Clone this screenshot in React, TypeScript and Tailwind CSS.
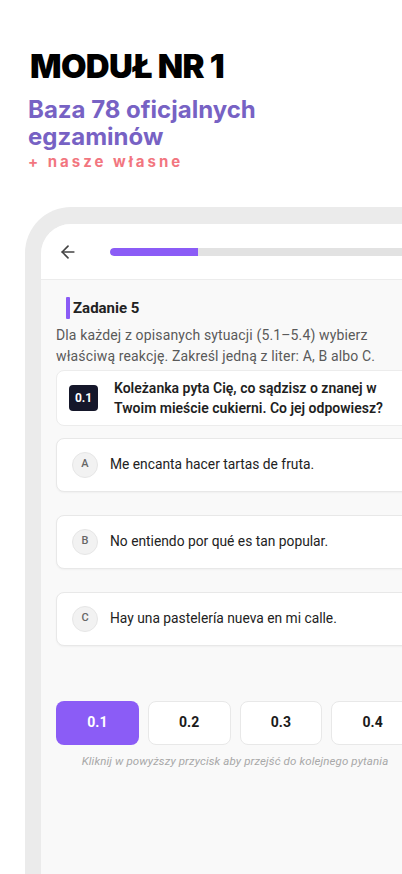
import React from 'react';

const options = [
  { letter: 'A', text: 'Me encanta hacer tartas de fruta.' },
  { letter: 'B', text: 'No entiendo por qué es tan popular.' },
  { letter: 'C', text: 'Hay una pastelería nueva en mi calle.' },
];

const steps = ['0.1', '0.2', '0.3', '0.4'];

const App: React.FC = () => {
  return (
    <div className="w-[402px] h-[874px] overflow-hidden bg-white font-['Inter',sans-serif]">
      {/* Headline */}
      <div className="pt-[46px] pl-[30px]">
        <h1 className="text-[33px] leading-[40px] font-black tracking-[-0.02em] text-black">MODUŁ NR 1</h1>
        <h2 className="mt-[10px] -ml-[2px] text-[24px] leading-[27px] font-bold text-[#7762c4] w-[260px]">
          Baza 78 oficjalnych egzaminów
        </h2>
        <p className="mt-[4px] -ml-[2px] text-[15px] leading-[15px] font-bold tracking-[0.2em] text-[#f2767f]">+ nasze własne</p>
      </div>

      {/* Phone mockup */}
      <div className="mt-[38px] ml-[25px] w-[420px] h-[700px] bg-[#ebebeb] rounded-tl-[46px] pt-[17px] pl-[16px]">
        <div className="w-[388px] h-[700px] bg-[#f9f9f9] rounded-tl-[30px] overflow-hidden font-['Roboto',sans-serif]">
          {/* Top bar */}
          <div className="h-[56px] bg-white border-b border-[#ececec] flex items-center pl-[17px] gap-[32px]">
            <svg width="20" height="20" viewBox="0 0 24 24" fill="none" stroke="#444" strokeWidth="2" strokeLinecap="round" strokeLinejoin="round">
              <path d="M19 12H5" />
              <path d="M12 19l-7-7 7-7" />
            </svg>
            <div className="flex-1 h-[8px] rounded-full bg-[#e2e2e2] overflow-hidden">
              <div className="h-full w-[88px] rounded-l-full bg-[#8b5cf6]" />
            </div>
          </div>

          {/* Content */}
          <div className="px-[15px] pt-[17px]">
            <div className="flex items-center ml-[10px]">
              <div className="w-[4px] h-[22px] bg-[#8b5cf6] rounded-[1px]" />
              <span className="ml-[3px] text-[15px] font-bold text-[#222]">Zadanie 5</span>
            </div>
            <p className="mt-[5px] text-[14px] leading-[21px] tracking-[0.01em] text-[#5a5a5a]">
              Dla każdej z opisanych sytuacji (5.1–5.4) wybierz właściwą reakcję. Zakreśl jedną z liter: A, B albo C.
            </p>

            <div className="mt-[3px] bg-white border border-[#ececec] rounded-[8px] flex items-center gap-[16px] pl-[12px] pr-[10px] py-[7px]">
              <div className="w-[29px] h-[26px] shrink-0 rounded-[4px] bg-[#15172a] text-white text-[12px] font-bold flex items-center justify-center">
                0.1
              </div>
              <p className="text-[14px] leading-[20px] font-semibold text-[#1f1f1f]">
                Koleżanka pyta Cię, co sądzisz o znanej w Twoim mieście cukierni. Co jej odpowiesz?
              </p>
            </div>

            <div className="mt-[12px] flex flex-col gap-[23px]">
              {options.map(o => (
                <div key={o.letter} className="h-[54px] bg-white border border-[#e8e8e8] rounded-[8px] shadow-[0_1px_2px_rgba(0,0,0,0.04)] flex items-center pl-[15px] gap-[12px]">
                  <div className="w-[26px] h-[26px] rounded-full bg-[#f2f2f2] border border-[#e6e6e6] flex items-center justify-center text-[11px] font-medium text-[#666]">
                    {o.letter}
                  </div>
                  <span className="text-[13.8px] text-[#222]">{o.text}</span>
                </div>
              ))}
            </div>

            <div className="mt-[55px] flex gap-[9px]">
              {steps.map((s, i) => (
                <div
                  key={s}
                  className={
                    i === 0
                      ? 'w-[83px] h-[44px] rounded-[8px] bg-[#8b5cf6] text-white text-[14px] font-bold flex items-center justify-center'
                      : 'w-[83px] h-[44px] rounded-[8px] bg-white border border-[#e8e8e8] text-[#1a1a1a] text-[14px] font-bold flex items-center justify-center'
                  }
                >
                  {s}
                </div>
              ))}
            </div>
            <p className="mt-[8px] text-center text-[11.5px] italic text-[#a8a8a8] tracking-[0.01em]">
              Kliknij w powyższy przycisk aby przejść do kolejnego pytania
            </p>
          </div>
        </div>
      </div>
    </div>
  );
};

export default App;
